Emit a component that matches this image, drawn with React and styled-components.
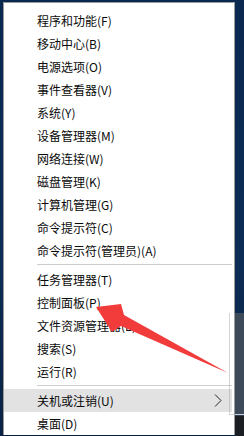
import React from 'react';
import styled, { createGlobalStyle } from 'styled-components';

const GlobalStyle = createGlobalStyle`
  html, body {
    margin: 0;
    padding: 0;
    background: #0c2a52;
    overflow: hidden;
  }
`;

const Desktop = styled.div`
  position: relative;
  display: flex;
  align-items: flex-start;
  width: 244px;
  height: 436px;
  box-sizing: border-box;
  padding: 2px 0 0 3px;
  overflow: hidden;
  background: linear-gradient(180deg, #0a2850 0%, #0d2c55 60%, #0a2244 100%);
`;

// window behind the menu, peeking out on the right
const BackWindow = styled.div`
  position: absolute;
  left: 229px;
  top: 313px;
  width: 30px;
  height: 102px;
  box-sizing: border-box;
  border-left: 1px solid #cfcfcf;
  border-bottom: 1px solid #cfcfcf;
  background: #3c4a5a;
`;

const Taskbar = styled.div`
  position: absolute;
  left: 235px;
  top: 415px;
  width: 20px;
  height: 30px;
  background: #1b1f24;
  border-top: 1px solid #2d3f58;
`;

const Menu = styled.div`
  position: relative;
  z-index: 1;
  display: flex;
  flex-direction: column;
  width: 232px;
  box-sizing: border-box;
  background: #fff;
  border: 1px solid #9b9b9b;
  border-bottom: none;
  padding: 6px 0 0;
  font-family: "Noto Sans CJK SC", "Microsoft YaHei", sans-serif;
  font-size: 12px;
  color: #0a0a0a;
`;

const Item = styled.div`
  display: flex;
  align-items: center;
  justify-content: space-between;
  height: 23px;
  margin-right: 2px;
  padding: 0 10px 0 33px;
  background: ${(p) => (p.$active ? '#e2e2e2' : 'transparent')};
  white-space: nowrap;
`;

const Separator = styled.div`
  display: flex;
  align-items: center;
  height: 6px;
  padding: 0 2px 1px 33px;
  box-sizing: border-box;

  &::after {
    content: '';
    flex: 1;
    height: 1px;
    background: #cdcdcd;
  }
`;

// see-through frame edge from the window behind
const FrameEdge = styled.div`
  position: absolute;
  z-index: 2;
  left: 229px;
  top: 313px;
  width: 5px;
  height: 102px;
  box-sizing: border-box;
  border-left: 1px solid rgba(160, 160, 160, 0.45);
  border-bottom: 1px solid rgba(160, 160, 160, 0.45);
  pointer-events: none;
`;

const ArrowLayer = styled.svg`
  position: absolute;
  z-index: 3;
  left: 0;
  top: 0;
  pointer-events: none;
`;

const Chevron = () => (
  <svg width="8" height="13" viewBox="0 0 8 13">
    <polyline points="1,0.5 7,6.5 1,12.5" fill="none" stroke="#222" strokeWidth="1" />
  </svg>
);

const groups = [
  [
    '程序和功能(F)',
    '移动中心(B)',
    '电源选项(O)',
    '事件查看器(V)',
    '系统(Y)',
    '设备管理器(M)',
    '网络连接(W)',
    '磁盘管理(K)',
    '计算机管理(G)',
    '命令提示符(C)',
    '命令提示符(管理员)(A)'
  ],
  [
    '任务管理器(T)',
    '控制面板(P)',
    '文件资源管理器(E)',
    '搜索(S)',
    '运行(R)'
  ],
  [
    '关机或注销(U)',
    '桌面(D)'
  ]
];

export default function App() {
  return (
    <Desktop>
      <GlobalStyle />
      <BackWindow />
      <Taskbar />
      <Menu>
        {groups.map((group, gi) => (
          <React.Fragment key={gi}>
            {gi > 0 && <Separator />}
            {group.map((label) => {
              const isSub = label.startsWith('关机');
              return (
                <Item key={label} $active={isSub}>
                  <span>{label}</span>
                  {isSub && <Chevron />}
                </Item>
              );
            })}
          </React.Fragment>
        ))}
      </Menu>
      <FrameEdge />
      <ArrowLayer width="244" height="436" viewBox="0 0 244 436">
        <polygon
          points="96,307 121,304 124,315 228,373 121,326 112,332"
          fill="#f23b3b"
        />
      </ArrowLayer>
    </Desktop>
  );
}
